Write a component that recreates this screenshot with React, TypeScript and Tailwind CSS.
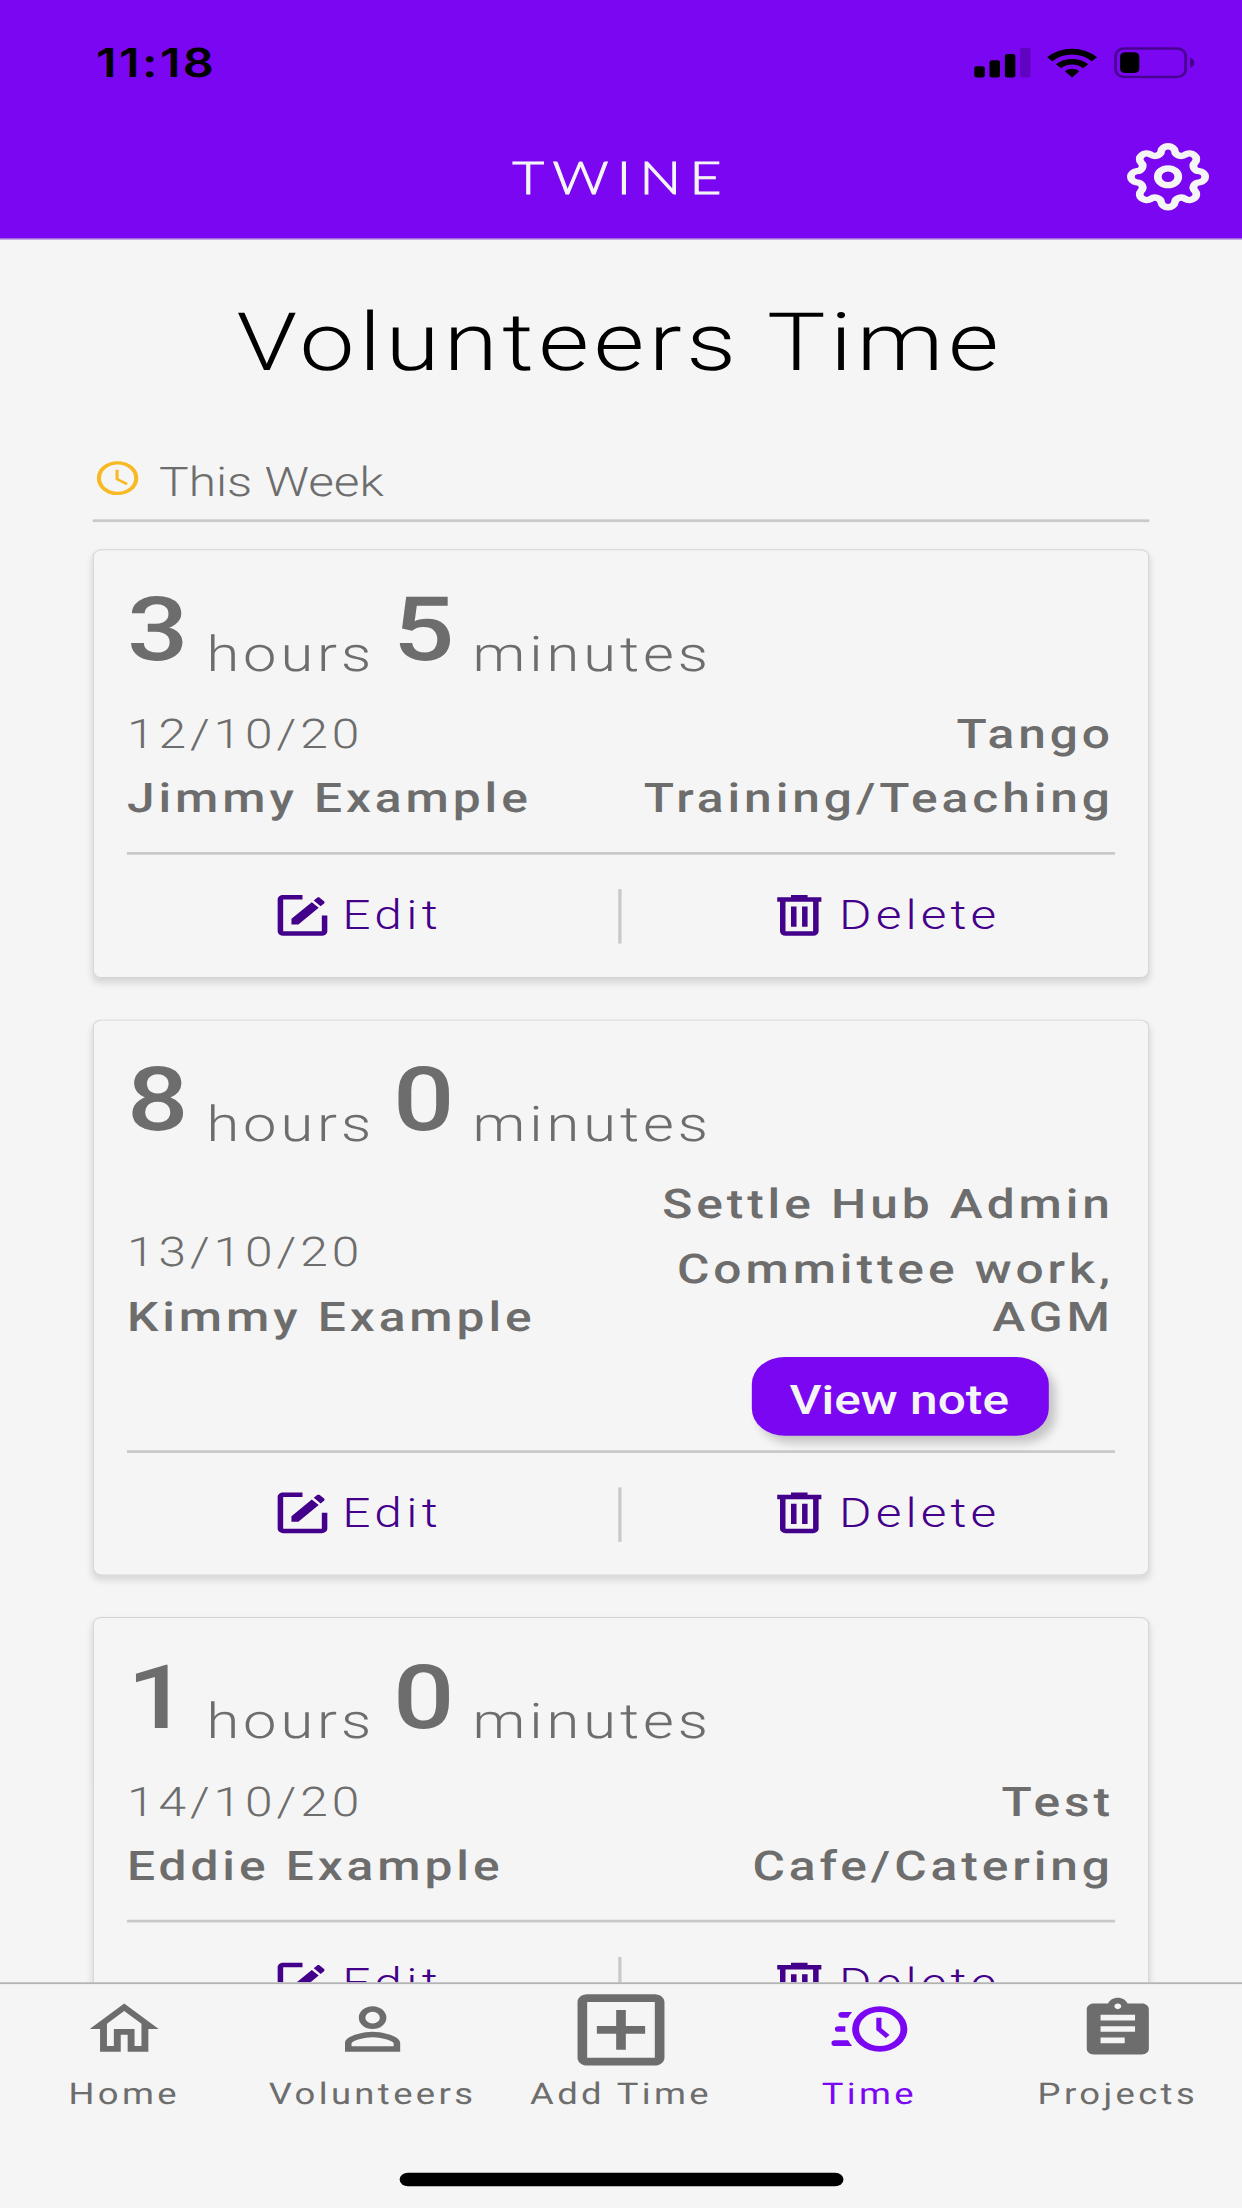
import React from "react";

const ICONS = {
  home: "M12 5.69l5 4.5V18h-2v-6H9v6H7v-7.81l5-4.5M12 3L2 12h3v8h6v-6h2v6h6v-8h3L12 3z",
  person:
    "M12 5.9a2.1 2.1 0 1 1 0 4.2 2.1 2.1 0 0 1 0-4.2m0 9c2.97 0 6.1 1.46 6.1 2.1v1.1H5.9V17c0-.64 3.13-2.1 6.1-2.1M12 4C9.79 4 8 5.79 8 8s1.79 4 4 4 4-1.79 4-4-1.79-4-4-4zm0 9c-2.67 0-8 1.34-8 4v3h16v-3c0-2.66-5.33-4-8-4z",
  addBox:
    "M19 3H5c-1.11 0-2 .9-2 2v14c0 1.1.89 2 2 2h14c1.1 0 2-.9 2-2V5c0-1.1-.9-2-2-2zm0 16H5V5h14v14zm-8-2h2v-4h4v-2h-4V7h-2v4H7v2h4z",
  clockFast:
    "M15,4A8,8 0 0,1 23,12A8,8 0 0,1 15,20A8,8 0 0,1 7,12A8,8 0 0,1 15,4M15,6A6,6 0 0,0 9,12A6,6 0 0,0 15,18A6,6 0 0,0 21,12A6,6 0 0,0 15,6M14,8H15.5V11.78L17.83,14.11L16.77,15.17L14,12.4V8M2,18A1,1 0 0,1 1,17A1,1 0 0,1 2,16H5.83C6.14,16.71 6.54,17.38 7,18H2M3,13A1,1 0 0,1 2,12A1,1 0 0,1 3,11H5.05L5,12L5.05,13H3M4,8A1,1 0 0,1 3,7A1,1 0 0,1 4,6H7C6.54,6.62 6.14,7.29 5.83,8H4Z",
  clipboard:
    "M19 3h-4.18C14.4 1.84 13.3 1 12 1c-1.3 0-2.4.84-2.82 2H5c-1.1 0-2 .9-2 2v14c0 1.1.9 2 2 2h14c1.1 0 2-.9 2-2V5c0-1.1-.9-2-2-2zm-7 0c.55 0 1 .45 1 1s-.45 1-1 1-1-.45-1-1 .45-1 1-1zm2 14H7v-2h7v2zm3-4H7v-2h10v2zm0-4H7V7h10v2z",
  clock:
    "M12,20A8,8 0 0,0 20,12A8,8 0 0,0 12,4A8,8 0 0,0 4,12A8,8 0 0,0 12,20M12,2A10,10 0 0,1 22,12A10,10 0 0,1 12,22C6.47,22 2,17.5 2,12A10,10 0 0,1 12,2M12.5,7V12.25L17,14.92L16.25,16.15L11,13V7H12.5Z",
  edit: "M5,3C3.89,3 3,3.89 3,5V19A2,2 0 0,0 5,21H19A2,2 0 0,0 21,19V12H19V19H5V5H12V3H5M17.78,4C17.61,4 17.43,4.07 17.3,4.2L16.08,5.41L18.58,7.91L19.8,6.7C20.06,6.44 20.06,6 19.8,5.75L18.25,4.2C18.12,4.07 17.95,4 17.78,4M15.37,6.12L8,13.5V16H10.5L17.87,8.62L15.37,6.12Z",
  trash:
    "M9,3V4H4V6H5V19A2,2 0 0,0 7,21H17A2,2 0 0,0 19,19V6H20V4H15V3H9M7,6H17V19H7V6M9,8V17H11V8H9M13,8V17H15V8H13Z",
};

function Icon({ name, className }: { name: keyof typeof ICONS; className: string }) {
  return (
    <svg viewBox="0 0 24 24" fill="currentColor" fillRule="evenodd" className={className}>
      <path d={ICONS[name]} />
    </svg>
  );
}

/* Eight rounded teeth joined by rounded valleys, centred on the origin. */
function gearPath() {
  const rot = (x: number, y: number, deg: number) => {
    const a = (deg * Math.PI) / 180;
    return `${(x * Math.cos(a) - y * Math.sin(a)).toFixed(2)} ${(x * Math.sin(a) + y * Math.cos(a)).toFixed(2)}`;
  };
  const x = 6.19;
  const y = -28.3;
  let d = `M${rot(-x, y, 0)}`;
  for (let k = 0; k < 8; k++) {
    d += `A6.25 6.25 0 0 1 ${rot(x, y, k * 45)}`;
    d += `A5.7 5.7 0 0 0 ${rot(-x, y, (k + 1) * 45)}`;
  }
  return d + "Z";
}

function StatusIcons() {
  return (
    <svg viewBox="0 0 202 36" className="h-[36px] w-[202px]">
      <rect x="0.5" y="22" width="9.5" height="12.5" rx="2.5" />
      <rect x="14.3" y="15.5" width="9.5" height="19" rx="2.5" />
      <rect x="28.2" y="8.7" width="9.5" height="25.8" rx="2.5" />
      <rect x="42" y="2" width="9.5" height="32.5" rx="2.5" opacity="0.2" />
      <path d="M66.5 12.2A32 32 0 0 1 111.7 12.2L107 16.6A25.5 25.5 0 0 0 71.2 16.6Z" />
      <path d="M74.5 19.9A21 21 0 0 1 103.7 19.9L99 24.2A14.5 14.5 0 0 0 79.2 24.2Z" />
      <path d="M82.6 27.5A9.5 9.5 0 0 1 95.6 27.5L89.1 34.5Z" />
      <rect x="128.5" y="2.5" width="63.5" height="31.5" rx="8" fill="none" stroke="#000" strokeOpacity="0.4" strokeWidth="2.6" />
      <rect x="132.6" y="6.6" width="17.4" height="23" rx="4.5" />
      <path d="M196 12.5C201 14.5 201 22 196 24Z" opacity="0.45" />
    </svg>
  );
}

type Entry = {
  hours: string;
  minutes: string;
  date: string;
  name: string;
  project: string;
  activity: string;
  note?: boolean;
};

const ENTRIES: Entry[] = [
  { hours: "3", minutes: "5", date: "12/10/20", name: "Jimmy Example", project: "Tango", activity: "Training/Teaching" },
  { hours: "8", minutes: "0", date: "13/10/20", name: "Kimmy Example", project: "Settle Hub Admin", activity: "Committee work, AGM", note: true },
  { hours: "1", minutes: "0", date: "14/10/20", name: "Eddie Example", project: "Test", activity: "Cafe/Catering" },
];

function TimeCard({ entry }: { entry: Entry }) {
  return (
    <article className="shrink-0 rounded-[8px] border-[1.5px] border-[#d3d3d3] px-[30px] pb-[32.5px] text-[45px] leading-[53px] tracking-[3.55px] shadow-[0_5px_7px_rgba(0,0,0,0.13)]">
      <div className="flex h-[176.3px] items-start pt-[48px]">
        <span className="w-[72px] text-[98px] leading-[80px] font-medium tracking-normal">{entry.hours}</span>
        <span className="mt-[38px] w-[168px] text-[54px] leading-[60px] font-light">hours</span>
        <span className="w-[73px] pl-[1px] text-[98px] leading-[80px] font-medium tracking-normal">{entry.minutes}</span>
        <span className="mt-[38px] text-[54px] leading-[60px] font-light">minutes</span>
      </div>
      <div className="flex items-end justify-between pr-[1px]">
        <div className="flex flex-col gap-[18px]">
          <span className="font-light">{entry.date}</span>
          <span className="font-medium">{entry.name}</span>
        </div>
        <div className="flex w-[447px] flex-col gap-[18px] text-right font-medium">
          <span>{entry.project}</span>
          <span>{entry.activity}</span>
        </div>
      </div>
      {entry.note && (
        <div className="mt-[18px] -mb-[17.5px] flex justify-end pr-[60px]">
          <button className="h-[87px] w-[269px] rounded-[30px] bg-[#7a06f2] pt-[7px] pr-[2px] text-[45px] font-medium tracking-[0px] text-[#f5f5f5] shadow-[6px_8px_10px_rgba(0,0,0,0.2)]">
            View note
          </button>
        </div>
      )}
      <div className="mt-[33px] flex h-[105px] items-end border-t-[3px] border-[#c9c9c9] font-light text-[#43008a]">
        <button className="mb-[2.5px] flex h-[66px] flex-1 items-center pl-[129px]">
          <Icon name="edit" className="mr-[6px] h-[60px] w-[60px]" />
          <span className="tracking-[3.9px]">Edit</span>
        </button>
        <span className="mb-[4px] h-[60px] w-[3px] bg-[#c9c9c9]" />
        <button className="mb-[2.5px] flex h-[66px] flex-1 items-center pl-[131px]">
          <Icon name="trash" className="mr-[6px] h-[60px] w-[60px]" />
          <span className="tracking-[3.7px]">Delete</span>
        </button>
      </div>
    </article>
  );
}

const TABS: { label: string; icon: keyof typeof ICONS; active?: boolean; large?: boolean }[] = [
  { label: "Home", icon: "home" },
  { label: "Volunteers", icon: "person" },
  { label: "Add Time", icon: "addBox", large: true },
  { label: "Time", icon: "clockFast", active: true },
  { label: "Projects", icon: "clipboard" },
];

export default function App() {
  return (
    <div className="h-[2208px] w-[1242px] overflow-hidden bg-[#f5f5f5]">
      {/* The 1125×2436 phone canvas is fitted to the 1242×2208 frame. */}
      <div className="flex h-[2436px] w-[1125px] origin-top-left scale-x-[1.104] scale-y-[0.9064] flex-col bg-[#f5f5f5] font-['Roboto',sans-serif] text-[#6d6d6d] [text-rendering:geometricPrecision]">
        <header className="flex h-[264px] shrink-0 flex-col border-b border-[#b9a3cf] bg-[#7a06f2]">
          <div className="flex h-[137px] items-center justify-between pr-[41px] pl-[87px] text-black">
            <span className="font-['Inter',sans-serif] text-[44px] font-semibold tracking-[2.2px]">11:18</span>
            <StatusIcons />
          </div>
          <div className="grid grid-cols-[1fr_auto_1fr] items-center px-[29px] text-[#f5f5f5]">
            <span />
            <h1 className="font-['Lato',sans-serif] text-[50px] leading-[116px] font-light tracking-[7.5px] [-webkit-text-stroke:1.1px_#f5f5f5]">TWINE</h1>
            <svg viewBox="-38 -38 76 76" fill="none" stroke="currentColor" strokeWidth="7" className="h-[76px] w-[76px] justify-self-end">
              <path d={gearPath()} strokeLinejoin="round" />
              <circle r="9.3" />
            </svg>
          </div>
        </header>

        <main className="flex min-h-0 flex-1 flex-col overflow-hidden px-[84px]">
          <h2 className="mt-[60.5px] pr-[2px] text-center text-[89px] leading-[106px] font-light tracking-[4px] text-black">Volunteers Time</h2>
          <div className="mt-[62.5px] flex h-[83px] shrink-0 items-center border-b-[3px] border-[#c9c9c9] pb-[8px]">
            <Icon name="clock" className="-mt-[4px] h-[45px] w-[45px] text-[#f7b924]" />
            <span className="mt-[4px] ml-[15px] text-[45px] leading-[53px] font-light">This Week</span>
          </div>
          <div className="mt-[30px] flex flex-col gap-[46px]">
            {ENTRIES.map((e) => (
              <TimeCard key={e.name} entry={e} />
            ))}
          </div>
        </main>

        <nav className="flex h-[249px] shrink-0 flex-col items-center justify-between border-t-[2px] border-[#b4b4b4] pb-[24px]">
          <div className="grid w-full grid-cols-5">
            {TABS.map((t) => (
              <div key={t.label} className={t.active ? "flex flex-col items-center text-[#7a06f2]" : "flex flex-col items-center"}>
                <div className="flex h-[102px] items-center">
                  <Icon name={t.icon} className={t.large ? "-mt-px h-[105px] w-[105px]" : "-mt-[4px] h-[75px] w-[75px]"} />
                </div>
                <span className="text-[33px] leading-[40px] tracking-[3.05px] whitespace-nowrap">{t.label}</span>
              </div>
            ))}
          </div>
          <div className="h-[15px] w-[402px] rounded-full bg-black" />
        </nav>
      </div>
    </div>
  );
}
